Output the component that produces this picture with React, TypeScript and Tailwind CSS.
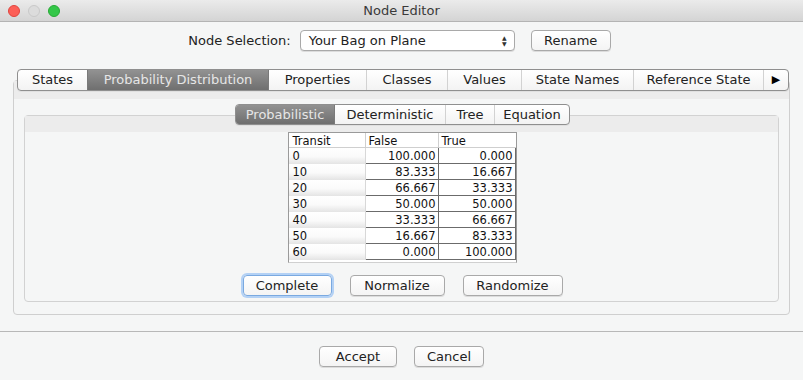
import { ReactNode } from 'react';

const ui = "font-['DejaVu_Sans',sans-serif]";

function TabStrip({ tabs, widths, selected, height }: { tabs: ReactNode[]; widths: number[]; selected: number; height: string }) {
  return (
    <div className={`flex ${height} rounded-[4px] border border-[#8f8f8f] bg-gradient-to-b from-white to-[#f3f3f3] overflow-hidden shadow-[0_1px_0_#e0e0e0]`}>
      {tabs.map((t, i) => {
        const sel = i === selected;
        const edge = i === 0 ? '' : sel || i === selected + 1 ? 'border-l border-[#7a7a7a]' : 'border-l border-[#d2d2d2]';
        return (
          <div
            key={i}
            style={{ width: widths[i] }}
            className={`flex items-center justify-center shrink-0 ${edge} ${
              sel ? 'bg-gradient-to-b from-[#929292] to-[#6f6f6f] text-[#e6e6e6]' : 'text-[#222]'
            }`}
          >
            {t}
          </div>
        );
      })}
    </div>
  );
}

function Btn({ label, w, focus }: { label: string; w: string; focus?: boolean }) {
  return (
    <div
      className={`${w} h-[21px] flex items-center justify-center rounded-[4px] border bg-gradient-to-b from-white to-[#f4f4f4] text-[13px] text-[#222] ${
        focus ? 'border-[#7aa9e0] shadow-[0_0_0_2px_#b3d1f5]' : 'border-[#a9a9a9] shadow-[0_1px_0_#dcdcdc]'
      }`}
    >
      {label}
    </div>
  );
}

export default function App() {
  const mainTabs = ['States', 'Probability Distribution', 'Properties', 'Classes', 'Values', 'State Names', 'Reference State', <span className="text-[11px] text-black">▶</span>];
  const mainWidths = [69, 181, 98, 81, 74, 112, 130, 25];
  const subTabs = ['Probabilistic', 'Deterministic', 'Tree', 'Equation'];
  const subWidths = [98, 111, 49, 75];
  const rows = [
    ['0', '100.000', '0.000'],
    ['10', '83.333', '16.667'],
    ['20', '66.667', '33.333'],
    ['30', '50.000', '50.000'],
    ['40', '33.333', '66.667'],
    ['50', '16.667', '83.333'],
    ['60', '0.000', '100.000'],
  ];

  return (
    <div className={`w-[803px] h-[380px] bg-[#f5f6f6] flex flex-col overflow-hidden ${ui} text-[13px] text-[#222]`}>
      {/* title bar */}
      <div className="relative h-[22px] shrink-0 flex items-center justify-center bg-gradient-to-b from-[#ebebeb] to-[#d4d4d4] border-b border-[#b4b4b4]">
        <div className="absolute left-[8px] top-[5px] flex gap-[8px]">
          <div className="w-[12px] h-[12px] rounded-full bg-[#fc5f57] border border-[#e0443e]" />
          <div className="w-[12px] h-[12px] rounded-full bg-[#dcdcdc] border border-[#c9c9c9]" />
          <div className="w-[12px] h-[12px] rounded-full bg-[#34c749] border border-[#27aa35]" />
        </div>
        <span className="text-[13px] text-[#3a3a3a]">Node Editor</span>
      </div>

      {/* node selection */}
      <div className="mt-[8px] h-[21px] flex items-center justify-center">
        <span className="mr-[9px] ml-[-4px]">Node Selection:</span>
        <div className="w-[215px] h-[21px] flex items-center justify-between pl-[8px] pr-[7px] rounded-[4px] border border-[#a9a9a9] bg-white shadow-[0_1px_0_#dcdcdc]">
          <span>Your Bag on Plane</span>
          <span className="flex flex-col leading-[6px] text-[6px] text-[#333]">
            <span>▲</span>
            <span>▼</span>
          </span>
        </div>
        <div className="ml-[16px]">
          <Btn label="Rename" w="w-[80px]" />
        </div>
      </div>

      {/* main tabbed pane */}
      <div className="mt-[18px] px-[13px] flex flex-col">
        <div className="relative z-10 flex pl-[4px]">
          <TabStrip tabs={mainTabs} widths={mainWidths} selected={1} height="h-[22px]" />
        </div>
        <div className="-mt-[11px] h-[235px] border border-[#cfcfcf] rounded-[4px] flex flex-col">
          <div className="h-[18px] shrink-0 bg-[#ececec]" />
          <div className="relative z-10 mt-[5px] flex justify-center pl-[2px]">
            <TabStrip tabs={subTabs} widths={subWidths} selected={0} height="h-[21px]" />
          </div>
          <div className="mx-[10px] -mt-[10px] h-[187px] border border-[#d2d2d2] rounded-[4px] flex flex-col items-center">
            <div className="h-[16px] w-full shrink-0 bg-[#ececec]" />
            {/* table */}
            <div className="w-[229px] h-[131px] border border-[#9a9a9a] border-b-[#d0d0d0] bg-white text-[11.5px] text-[#111] ml-[1px]">
              <div className="flex h-[15px] border-b border-[#cfcfcf]">
                <div className="w-[77px] pl-[4px] border-r border-[#cfcfcf] leading-[16px]">Transit</div>
                <div className="w-[73px] pl-[3px] border-r border-[#cfcfcf] leading-[16px]">False</div>
                <div className="flex-1 pl-[3px] leading-[16px]">True</div>
              </div>
              {rows.map((r) => (
                <div key={r[0]} className="flex h-[16px]">
                  <div className="w-[77px] pl-[4px] border-r border-[#d8d8d8] bg-[linear-gradient(#ffffff,#fafafa_55%,#e4e4e4)] leading-[17px]">{r[0]}</div>
                  <div className="w-[73px] pr-[2px] text-right border-r border-b border-[#6b6b6b] leading-[16px]">{r[1]}</div>
                  <div className="flex-1 pr-[2px] text-right border-r border-b border-[#6b6b6b] leading-[16px]">{r[2]}</div>
                </div>
              ))}
            </div>
            <div className="mt-[12px] flex gap-[18px] pl-[2px]">
              <Btn label="Complete" w="w-[89px]" focus />
              <Btn label="Normalize" w="w-[95px]" />
              <Btn label="Randomize" w="w-[100px]" />
            </div>
          </div>
        </div>
      </div>

      {/* footer */}
      <div className="mt-[16px] border-t border-[#b8b8b8] shadow-[inset_0_1px_0_#ffffff]" />
      <div className="mt-[14px] flex justify-center gap-[17px]">
        <Btn label="Accept" w="w-[78px]" />
        <Btn label="Cancel" w="w-[70px]" />
      </div>
    </div>
  );
}
